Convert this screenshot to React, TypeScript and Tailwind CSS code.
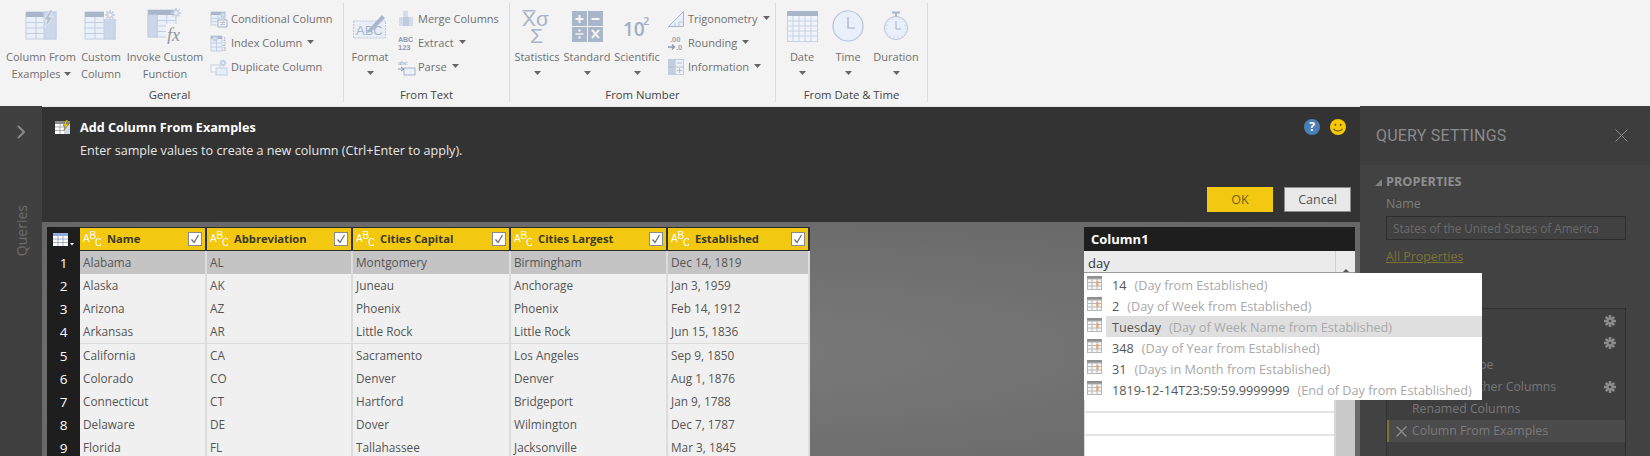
import React from "react";

const font = "font-['Open_Sans','Noto_Sans',sans-serif]";

function Caret({ color = "#666" }: { color?: string }) {
  return (
    <svg width="7" height="4" viewBox="0 0 7 4" className="shrink-0">
      <path d="M0 0h7L3.5 4z" fill={color} />
    </svg>
  );
}

function Burst({ x, y, r = 5, color = "#c3cedf" }: { x: number; y: number; r?: number; color?: string }) {
  const spokes = [0, 45, 90, 135];
  return (
    <g stroke={color} strokeWidth="1.6">
      {spokes.map((a) => (
        <line key={a} x1={x - r} y1={y} x2={x + r} y2={y} transform={`rotate(${a} ${x} ${y})`} />
      ))}
      <circle cx={x} cy={y} r={r * 0.45} fill="#eef2f8" strokeWidth="1" />
    </g>
  );
}

function TableGrid({ x, y, w, h, cols, rows, head = 5 }: { x: number; y: number; w: number; h: number; cols: number; rows: number; head?: number }) {
  const cw = w / cols;
  const rh = (h - head) / rows;
  return (
    <g>
      <rect x={x} y={y} width={w} height={h} fill="#eaf0f8" stroke="#c2cfe2" />
      <rect x={x} y={y} width={w} height={head} fill="#a9b5c9" />
      {Array.from({ length: cols - 1 }).map((_, i) => (
        <line key={i} x1={x + cw * (i + 1)} y1={y + head} x2={x + cw * (i + 1)} y2={y + h} stroke="#c2cfe2" />
      ))}
      {Array.from({ length: rows - 1 }).map((_, i) => (
        <line key={i} x1={x} y1={y + head + rh * (i + 1)} x2={x + w} y2={y + head + rh * (i + 1)} stroke="#c2cfe2" />
      ))}
    </g>
  );
}

function IconFromExamples() {
  return (
    <svg width="36" height="32" viewBox="0 0 36 32">
      <TableGrid x={3} y={2} w={30} h={27} cols={3} rows={4} />
      <rect x="21" y="2" width="12" height="27" fill="#cbd7e9" stroke="#c2cfe2" />
      <path d="M27 0l-6 10h3l-2 8 8-11h-4l4-7z" fill="#b5bfd0" stroke="#f3f3f3" strokeWidth=".7" />
    </svg>
  );
}
function IconCustom() {
  return (
    <svg width="36" height="32" viewBox="0 0 36 32">
      <TableGrid x={2} y={2} w={30} h={27} cols={3} rows={4} />
      <rect x="21" y="7" width="11" height="22" fill="#cbd7e9" stroke="#c2cfe2" />
      <rect x="21" y="0" width="12" height="9" fill="#f3f3f3" />
      <Burst x={27} y={5} />
    </svg>
  );
}
function IconInvoke() {
  return (
    <svg width="38" height="36" viewBox="0 0 38 36">
      <TableGrid x={2} y={2} w={28} h={27} cols={3} rows={4} />
      <rect x="2" y="7" width="9" height="22" fill="#cbd7e9" stroke="#c2cfe2" />
      <Burst x={30} y={5} />
      <rect x="20" y="16" width="18" height="18" fill="#f3f3f3" />
      <text x="21" y="33" fontFamily="Liberation Serif, serif" fontStyle="italic" fontSize="18" fill="#8e96a3">fx</text>
    </svg>
  );
}
function IconFormat() {
  return (
    <svg width="36" height="32" viewBox="0 0 36 32">
      <rect x="1.500" y="11" width="32" height="17" fill="#e8eef7" stroke="#bcc9dd" strokeDasharray="2 1" />
      <text x="4" y="25" fontFamily="Liberation Sans, sans-serif" fontSize="13" fill="#aab6ca">ABC</text>
      <path d="M16 20L30 5l3 3-14 14-4 1z" fill="#a9b5c9" />
    </svg>
  );
}
function IconStatistics() {
  return (
    <svg width="32" height="34" viewBox="0 0 32 34">
      <text x="1" y="17" fontFamily="Liberation Sans, sans-serif" fontSize="21" fill="#a8b3c5">{"Χσ"}</text>
      <rect x="1.500" y="1" width="13" height="1.500" fill="#a8b3c5" />
      <text x="9" y="34" fontFamily="Liberation Sans, sans-serif" fontSize="21" fill="#a8b3c5">{"Σ"}</text>
    </svg>
  );
}
function IconStandard() {
  return (
    <svg width="31" height="31" viewBox="0 0 31 31">
      <rect width="31" height="31" fill="#a9b6ca" />
      <path d="M15.500 0v31M0 15.500h31" stroke="#f3f3f3" strokeWidth="1" />
      <path d="M3.500 8h8M7.500 4v8M19.500 8h8" stroke="#f3f3f3" strokeWidth="2" />
      <path d="M3.500 23h8" stroke="#f3f3f3" strokeWidth="1.500" />
      <circle cx="7.500" cy="19.500" r="1.200" fill="#f3f3f3" />
      <circle cx="7.500" cy="26.500" r="1.200" fill="#f3f3f3" />
      <path d="M20 19l7 8M27 19l-7 8" stroke="#f3f3f3" strokeWidth="2" />
    </svg>
  );
}
function IconScientific() {
  return (
    <svg width="28" height="24" viewBox="0 0 28 24">
      <text x="0" y="22" fontFamily="Open Sans, sans-serif" fontWeight="600" fontSize="19" fill="#a2aec2">10</text>
      <text x="20" y="11" fontFamily="Open Sans, sans-serif" fontWeight="600" fontSize="11" fill="#a2aec2">2</text>
    </svg>
  );
}
function IconDate() {
  return (
    <svg width="31" height="31" viewBox="0 0 31 31">
      <rect x=".5" y=".5" width="30" height="30" fill="#f0f4fa" stroke="#c6d2e4" />
      <rect width="31" height="5" fill="#a9b6ca" />
      {[6, 12, 18, 24].map((v) => (
        <line key={v} x1={v} y1="5" x2={v} y2="31" stroke="#c6d2e4" />
      ))}
      {[10, 15, 20, 25].map((v) => (
        <line key={v} x1="0" y1={v} x2="31" y2={v} stroke="#c6d2e4" />
      ))}
    </svg>
  );
}
function IconTime() {
  return (
    <svg width="32" height="32" viewBox="0 0 32 32">
      <circle cx="16" cy="16" r="15" fill="#eaf0f9" stroke="#b6c3d8" strokeWidth="1.200" />
      <path d="M16 7v11h7" fill="none" stroke="#a2aec2" strokeWidth="1.200" />
    </svg>
  );
}
function IconDuration() {
  return (
    <svg width="26" height="30" viewBox="0 0 26 30">
      <path d="M9 1.500h8M13 1.500v4" stroke="#a9b6ca" strokeWidth="2" />
      <circle cx="13" cy="17" r="11.500" fill="#eaf0f9" stroke="#b6c3d8" />
      <circle cx="13" cy="17" r="9.500" fill="none" stroke="#c3cfe0" strokeDasharray="1 3" />
      <path d="M13 10v8h5" fill="none" stroke="#a2aec2" />
    </svg>
  );
}
function SmallConditional() {
  return (
    <svg width="18" height="17" viewBox="0 0 18 17">
      <TableGrid x={1} y={1} w={14} h={13} cols={2} rows={3} head={3} />
      <rect x="8" y="9" width="9" height="7" fill="#f3f3f3" stroke="#a9b5c9" />
      <path d="M10 13.500h5M10 11.500h5M14 10l-3 5" stroke="#a9b5c9" strokeWidth=".7" />
      <Burst x={13} y={4} r={3} />
    </svg>
  );
}
function SmallIndex() {
  return (
    <svg width="18" height="17" viewBox="0 0 18 17">
      <TableGrid x={1} y={1} w={11} h={15} cols={2} rows={3} head={3} />
      <Burst x={5} y={3.500} r={3} />
      <text x="13" y="6" fontSize="5" fill="#96a2b5" fontFamily="Liberation Sans, sans-serif">1</text>
      <text x="13" y="11" fontSize="5" fill="#96a2b5" fontFamily="Liberation Sans, sans-serif">2</text>
      <text x="13" y="16" fontSize="5" fill="#96a2b5" fontFamily="Liberation Sans, sans-serif">3</text>
    </svg>
  );
}
function SmallDuplicate() {
  return (
    <svg width="18" height="17" viewBox="0 0 18 17">
      <rect x="1" y="6" width="9" height="7" fill="#f7f9fc" stroke="#c2cfe2" />
      <rect x="6" y="9" width="11" height="7" fill="#e6edf6" stroke="#c2cfe2" />
      <Burst x={13} y={4} r={3.500} />
    </svg>
  );
}
function SmallMerge() {
  return (
    <svg width="16" height="16" viewBox="0 0 16 16">
      <rect x="5" y="0" width="5" height="6" fill="#d3dceb" />
      <rect x="1" y="6" width="14" height="9" fill="#d3dceb" />
      <rect x="5" y="6" width="6" height="9" fill="#bfcbdc" />
    </svg>
  );
}
function SmallExtract() {
  return (
    <svg width="16" height="16" viewBox="0 0 16 16">
      <text x="0" y="7" fontSize="7" fontWeight="700" fill="#8d99ad" fontFamily="Liberation Sans, sans-serif">ABC</text>
      <text x="0" y="15" fontSize="7.500" fontWeight="700" fill="#8d99ad" fontFamily="Liberation Sans, sans-serif">123</text>
    </svg>
  );
}
function SmallParse() {
  return (
    <svg width="18" height="17" viewBox="0 0 18 17">
      <text x="0" y="6" fontSize="7" fill="#8d99ad" fontFamily="Liberation Serif, serif">abc</text>
      <rect x="6" y="9" width="11" height="7" fill="#eaf0f8" stroke="#a9b5c9" />
      <path d="M0 10h6M3 8l3 2-3 2" stroke="#8d99ad" fill="none" />
    </svg>
  );
}
function SmallTrig() {
  return (
    <svg width="16" height="16" viewBox="0 0 16 16">
      <path d="M.5 15.500L15.500.5v15z" fill="#e8eef7" stroke="#a9b5c9" />
      <path d="M11 15V11h4M7 15v-3" stroke="#bcc9dd" fill="none" />
    </svg>
  );
}
function SmallRounding() {
  return (
    <svg width="16" height="16" viewBox="0 0 16 16">
      <text x="2" y="7" fontSize="7.500" fontWeight="700" fill="#9aa6b8" fontFamily="Liberation Sans, sans-serif">.00</text>
      <text x="8" y="15" fontSize="7.500" fontWeight="700" fill="#9aa6b8" fontFamily="Liberation Sans, sans-serif">.0</text>
      <path d="M0 12h6M4 9.500L6.500 12 4 14.500" stroke="#8d99ad" strokeWidth="1.300" fill="none" />
    </svg>
  );
}
function SmallInfo() {
  return (
    <svg width="16" height="16" viewBox="0 0 16 16">
      <rect x=".5" y=".5" width="15" height="15" fill="#eaf0f8" stroke="#c2cfe2" />
      <rect x=".5" y=".5" width="6" height="15" fill="#c3cfe0" />
      <path d="M9 4h5M9 11.500h5M11.500 9v5M0 8h16M7 0v16" stroke="#a9b5c9" strokeWidth=".8" />
    </svg>
  );
}

function LargeBtn({ icon, lines, caret, w }: { icon: React.ReactNode; lines: string[]; caret?: "inline" | "below"; w: string }) {
  return (
    <div className={`${w} flex flex-col items-center shrink-0`}>
      <div className="h-[34px] flex items-center justify-center">{icon}</div>
      <div className="mt-[5px] text-[11px] leading-[17px] text-[#707070] text-center whitespace-nowrap">
        <div>{lines[0]}</div>
        {lines[1] ? (
          <div className="flex items-center justify-center gap-[3px]">
            <span>{lines[1]}</span>
            {caret === "inline" && <Caret />}
          </div>
        ) : null}
      </div>
      {caret === "below" && (
        <div className="mt-[6px]">
          <Caret />
        </div>
      )}
    </div>
  );
}

function SmallBtn({ icon, label, caret, w }: { icon: React.ReactNode; label: string; caret?: boolean; w: string }) {
  return (
    <div className="h-[24px] flex items-center text-[11px] text-[#707070] whitespace-nowrap">
      <div className={`${w} shrink-0 flex items-center`}>{icon}</div>
      <span>{label}</span>
      {caret && (
        <span className="ml-[5px] mb-[2px]">
          <Caret />
        </span>
      )}
    </div>
  );
}

function Group({ label, w, pad = "", children }: { label: string; w: string; pad?: string; children: React.ReactNode }) {
  return (
    <div className={`${w} shrink-0 h-[99px] mt-[3px] flex flex-col border-r border-[#dcdcdc]`}>
      <div className="flex-1 flex pt-[6px]">{children}</div>
      <div className={`${pad} h-[14px] text-center text-[11.3px] leading-[14px] text-[#444444]`}>{label}</div>
    </div>
  );
}

function Ribbon() {
  return (
    <div className="h-[106px] shrink-0 bg-[#f3f3f3] flex">
      <Group label="General" w="w-[344px]" pad="pr-[4px]">
        <LargeBtn w="w-[76px] ml-[3px]" icon={<IconFromExamples />} lines={["Column From", "Examples"]} caret="inline" />
        <LargeBtn w="w-[44px]" icon={<IconCustom />} lines={["Custom", "Column"]} />
        <LargeBtn w="w-[80px] ml-[2px]" icon={<IconInvoke />} lines={["Invoke Custom", "Function"]} />
        <div className="ml-[5px] -mt-[2px]">
          <SmallBtn w="w-[21px]" icon={<SmallConditional />} label="Conditional Column" />
          <SmallBtn w="w-[21px]" icon={<SmallIndex />} label="Index Column" caret />
          <SmallBtn w="w-[21px]" icon={<SmallDuplicate />} label="Duplicate Column" />
        </div>
      </Group>
      <Group label="From Text" w="w-[166px]">
        <LargeBtn w="w-[44px] ml-[4px]" icon={<IconFormat />} lines={["Format"]} caret="below" />
        <div className="ml-[6px] -mt-[2px]">
          <SmallBtn w="w-[20px]" icon={<SmallMerge />} label="Merge Columns" />
          <SmallBtn w="w-[20px]" icon={<SmallExtract />} label="Extract" caret />
          <SmallBtn w="w-[20px]" icon={<SmallParse />} label="Parse" caret />
        </div>
      </Group>
      <Group label="From Number" w="w-[266px]">
        <LargeBtn w="w-[50px] ml-[2px]" icon={<IconStatistics />} lines={["Statistics"]} caret="below" />
        <LargeBtn w="w-[50px]" icon={<IconStandard />} lines={["Standard"]} caret="below" />
        <LargeBtn w="w-[50px]" icon={<IconScientific />} lines={["Scientific"]} caret="below" />
        <div className="ml-[6px] -mt-[2px]">
          <SmallBtn w="w-[20px]" icon={<SmallTrig />} label="Trigonometry" caret />
          <SmallBtn w="w-[20px]" icon={<SmallRounding />} label="Rounding" caret />
          <SmallBtn w="w-[20px]" icon={<SmallInfo />} label="Information" caret />
        </div>
      </Group>
      <Group label="From Date & Time" w="w-[152px]">
        <LargeBtn w="w-[44px] ml-[4px]" icon={<IconDate />} lines={["Date"]} caret="below" />
        <LargeBtn w="w-[46px] ml-[1px]" icon={<IconTime />} lines={["Time"]} caret="below" />
        <LargeBtn w="w-[50px]" icon={<IconDuration />} lines={["Duration"]} caret="below" />
      </Group>
    </div>
  );
}

function AbcIcon() {
  return (
    <svg width="18" height="18" viewBox="0 0 18 18" className="shrink-0">
      <g fontFamily="Liberation Sans, sans-serif" fontSize="10" fill="#ffffff">
        <text x="0" y="12">A</text>
        <text x="6.500" y="9">B</text>
        <text x="12" y="16">C</text>
      </g>
    </svg>
  );
}

function CheckBox() {
  return (
    <div className="w-[14px] h-[14px] shrink-0 bg-white border border-[#8a8a8a] flex items-center justify-center">
      <svg width="10" height="10" viewBox="0 0 10 10">
        <path d="M1.500 5.500L4 8.500 8.500 1" fill="none" stroke="#6f6f6f" strokeWidth="1.300" />
      </svg>
    </div>
  );
}

const cols = ["Name", "Abbreviation", "Cities Capital", "Cities Largest", "Established"];
const rows = [
  ["Alabama", "AL", "Montgomery", "Birmingham", "Dec 14, 1819"],
  ["Alaska", "AK", "Juneau", "Anchorage", "Jan 3, 1959"],
  ["Arizona", "AZ", "Phoenix", "Phoenix", "Feb 14, 1912"],
  ["Arkansas", "AR", "Little Rock", "Little Rock", "Jun 15, 1836"],
  ["California", "CA", "Sacramento", "Los Angeles", "Sep 9, 1850"],
  ["Colorado", "CO", "Denver", "Denver", "Aug 1, 1876"],
  ["Connecticut", "CT", "Hartford", "Bridgeport", "Jan 9, 1788"],
  ["Delaware", "DE", "Dover", "Wilmington", "Dec 7, 1787"],
  ["Florida", "FL", "Tallahassee", "Jacksonville", "Mar 3, 1845"],
];
const grid = "grid grid-cols-[33px_127px_146px_158px_157px_142px]";

function DataTable() {
  return (
    <div className="w-[763px] shrink-0">
      <div className={`${grid} h-[24px]`}>
        <div className="bg-[#1e1e1e] flex items-center justify-center">
          <svg width="22" height="15" viewBox="0 0 22 15">
            <rect x="0" y="1" width="15" height="13" fill="#ffffff" />
            <rect x="0" y="1" width="15" height="3" fill="#8faadc" />
            <path d="M5 4v10M10 4v10M0 7h15M0 10.500h15" stroke="#8b9db8" strokeWidth=".8" />
            <path d="M17 11h4l-2 2.500z" fill="#ffffff" />
          </svg>
        </div>
        {cols.map((c) => (
          <div key={c} className="bg-[#f2c811] border-y border-y-[#2a2a2a] border-r-2 border-r-[#2f3640] flex items-center pl-[3px] pr-[3px]">
            <AbcIcon />
            <span className="ml-[6px] flex-1 pt-[1px] text-[11.2px] font-bold text-[#3a3a2a] whitespace-nowrap">{c}</span>
            <CheckBox />
          </div>
        ))}
      </div>
      {rows.map((r, i) => (
        <div key={r[0]} className={`${grid} h-[23.17px]`}>
          <div className="bg-[#1e1e1e] text-white text-[13.5px] leading-[24px] text-center border-b border-b-[#333333]">{i + 1}</div>
          {r.map((v) => (
            <div
              key={v}
              className={`border-b-2 border-r-2 border-b-[#dcdcdc] border-r-[#dcdcdc] pl-[3px] text-[11.8px] leading-[23px] text-[#555555] whitespace-nowrap ${
                i === 0 ? "bg-[#c4c4c4]" : "bg-[#f0f0f0]"
              }`}
            >
              {v}
            </div>
          ))}
        </div>
      ))}
    </div>
  );
}

function SuggestIcon() {
  return (
    <svg width="15" height="14" viewBox="0 0 15 14" className="shrink-0">
      <rect width="15" height="3" fill="#909090" />
      <rect x=".5" y="3" width="14" height="10.500" fill="#f6f6f6" stroke="#b8b8b8" />
      <path d="M5 3v11M10 3v11M0 6.500h15M0 10h15" stroke="#b8b8b8" />
      <rect x="9.500" y="5" width="2" height="5" fill="#f0a060" />
    </svg>
  );
}

const suggestions: [string, string][] = [
  ["14", "(Day from Established)"],
  ["2", "(Day of Week from Established)"],
  ["Tuesday", "(Day of Week Name from Established)"],
  ["348", "(Day of Year from Established)"],
  ["31", "(Days in Month from Established)"],
  ["1819-12-14T23:59:59.9999999", "(End of Day from Established)"],
];

function ExampleColumn() {
  return (
    <div className="w-[271px] shrink-0 relative">
      <div className="h-[24px] bg-[#1e1e1e] text-white font-bold text-[13px] leading-[24px] pl-[7px]">Column1</div>
      <div className="h-[22px] flex bg-[#ebebeb] border-b border-b-[#9a9a9a]">
        <div className="flex-1 text-[13px] leading-[25px] text-[#333333] pl-[4px] border-r border-r-[#d0d0d0]">day</div>
        <div className="w-[19px] flex items-end justify-center">
          <svg width="6" height="3" viewBox="0 0 6 3">
            <path d="M0 3h6L3 0z" fill="#555555" />
          </svg>
        </div>
      </div>
      <div className="flex">
        <div className="w-[252px] bg-white border-l border-l-[#d8d8d8] border-r-2 border-r-[#d8d8d8]">
          {Array.from({ length: 9 }).map((_, i) => (
            <div key={i} className={`border-b-2 border-b-[#e4e4e4] ${i === 5 ? "h-[24px]" : "h-[23.17px]"}`} />
          ))}
        </div>
        <div className="w-[19px] bg-[#c9c9c9]" />
      </div>
      <div className="absolute z-10 top-[46px] left-0 w-[398px] h-[127px] bg-white pt-[1px]">
        {suggestions.map(([v, d]) => {
          const active = v === "Tuesday";
          return (
            <div key={v} className="h-[21px] flex items-center whitespace-nowrap">
              <div className="w-[22px] pl-[3px] shrink-0 -mt-[4px]">
                <SuggestIcon />
              </div>
              <div className={`flex-1 h-full flex items-center pt-[3px] pl-[6px] ${active ? "bg-[#dfdfdf]" : ""}`}>
                <span className="text-[12.7px] text-[#555555]">{v}</span>
                <span className="ml-[8px] text-[12.7px] text-[#a9a9a9]">{d}</span>
              </div>
            </div>
          );
        })}
      </div>
    </div>
  );
}

function Gear() {
  return (
    <svg width="12" height="12" viewBox="0 0 12 12" className="shrink-0">
      <g stroke="#8c8c8c" strokeWidth="2.500">
        <path d="M6 0v12M0 6h12M1.800 1.800l8.400 8.400M10.200 1.800l-8.400 8.400" />
      </g>
      <circle cx="6" cy="6" r="3" fill="#8c8c8c" />
      <circle cx="6" cy="6" r="1.300" fill="#404040" />
    </svg>
  );
}

const steps: [string, boolean][] = [
  ["Source", true],
  ["Navigation", true],
  ["Changed Type", false],
  ["Removed Other Columns", true],
  ["Renamed Columns", false],
];

function QuerySettings() {
  return (
    <div className="w-[290px] shrink-0 bg-[#424242] flex flex-col">
      <div className="h-[59px] shrink-0 bg-[#3d3d3d] flex items-center justify-between pl-[16px] pr-[22px]">
        <span className="font-['Roboto',sans-serif] text-[16px] tracking-[0.2px] text-[#8b8b8b]">QUERY SETTINGS</span>
        <svg width="13" height="13" viewBox="0 0 13 13">
          <path d="M.5.5l12 12M12.500.5l-12 12" stroke="#8a8a8a" strokeWidth="1" />
        </svg>
      </div>
      <div className="pl-[26px] pr-[24px] pt-[8px]">
        <div className="relative h-[18px] flex items-center text-[12.7px] font-bold text-[#8f8f8f]">
          <svg width="7" height="7" viewBox="0 0 7 7" className="absolute -left-[11px] top-[6px]">
            <path d="M7 0v7H0z" fill="#7f7f7f" />
          </svg>
          PROPERTIES
        </div>
        <div className="mt-[4px] text-[12.4px] leading-[18px] text-[#7e7e7e]">Name</div>
        <div className="mt-[3px] h-[24px] border border-[#2d2d2d] bg-[#414141] pl-[6px] text-[11.7px] leading-[22px] text-[#6b6b6b] whitespace-nowrap">
          States of the United States of America
        </div>
        <div className="mt-[8px] text-[12.4px] leading-[18px] text-[#7d7332] underline">All Properties</div>
        <div className="mt-[14px] text-[12.7px] leading-[18px] font-bold text-[#8f8f8f]">APPLIED STEPS</div>
        <div className="mt-[10px] h-[200px] border-t border-l border-r border-[#2f2f2f] bg-[#3f3f3f] pt-[1px]">
          {steps.map(([s, g]) => (
            <div key={s} className="h-[22px] flex items-center justify-between pl-[25px] pr-[9px] text-[12.3px] text-[#777777] whitespace-nowrap">
              <span>{s}</span>
              {g && <Gear />}
            </div>
          ))}
          <div className="h-[22px] flex items-center bg-[#4b4b4b] border-l-2 border-l-[#7d7332] pl-[7px] text-[12.3px] text-[#7b7b7b] whitespace-nowrap">
            <svg width="11" height="11" viewBox="0 0 11 11" className="mr-[5px] shrink-0">
              <path d="M.5.5l10 10M10.500.5l-10 10" stroke="#8c8c8c" strokeWidth="1.300" />
            </svg>
            Column From Examples
          </div>
        </div>
      </div>
    </div>
  );
}

function DialogHead() {
  return (
    <div className="h-[116px] shrink-0 bg-[#333333] flex flex-col border-t-[1px] border-t-[#e8e8e8] pl-[13px] pr-[9px]">
      <div className="flex pt-[12px]">
        <svg width="16" height="15" viewBox="0 0 16 15" className="mt-[1px] shrink-0">
          <rect x="0" y="1" width="15" height="13" fill="#ffffff" />
          <rect x="0" y="1" width="15" height="3" fill="#8c8c8c" />
          <path d="M5 4v10M10 4v10M0 7h15M0 10.500h15" stroke="#9a9a9a" strokeWidth=".8" />
          <rect x="10" y="4" width="5" height="10" fill="#cfd8e6" />
          <path d="M11 0L8 6h2L9 10l5-6h-3l2-4z" fill="#f2c811" stroke="#333333" strokeWidth=".4" />
        </svg>
        <div className="ml-[9px] flex-1">
          <div className="text-[12.6px] font-bold text-white leading-[18px]">Add Column From Examples</div>
          <div className="mt-[5px] text-[12.6px] text-[#e6e6e6] leading-[18px]">Enter sample values to create a new column (Ctrl+Enter to apply).</div>
        </div>
        <div className="flex items-start gap-[10px] pr-[5px]">
          <div className="w-[16px] h-[16px] rounded-full bg-[#4a80b8] text-white text-[12px] font-bold leading-[16px] text-center">?</div>
          <svg width="16" height="16" viewBox="0 0 15 15">
            <circle cx="7.500" cy="7.500" r="7.500" fill="#f8c800" />
            <circle cx="5" cy="5.500" r="1" fill="#6b5a10" />
            <circle cx="10" cy="5.500" r="1" fill="#6b5a10" />
            <path d="M3.500 9c1 3 7 3 8 0" fill="none" stroke="#6b5a10" />
          </svg>
        </div>
      </div>
      <div className="flex justify-end gap-[11px] mt-[27px]">
        <div className="w-[66px] h-[25px] bg-[#f2c811] text-[#6e5f10] text-[12.5px] leading-[25px] text-center">OK</div>
        <div className="w-[67px] h-[25px] bg-[#e8e8e8] border border-[#8c8c8c] text-[#555555] text-[12.5px] leading-[23px] text-center">Cancel</div>
      </div>
    </div>
  );
}

export default function App() {
  return (
    <div className={`${font} w-[1650px] h-[456px] overflow-hidden flex flex-col bg-[#333333]`}>
      <Ribbon />
      <div className="flex-1 flex min-h-0">
        <div className="w-[42px] shrink-0 bg-[#404040] flex flex-col items-center pt-[19px]">
          <svg width="10" height="14" viewBox="0 0 10 14">
            <path d="M2 1l6 6-6 6" fill="none" stroke="#8a8a8a" strokeWidth="2" />
          </svg>
          <div className="mt-[66px] [writing-mode:vertical-rl] rotate-180 text-[14px] text-[#6d6d6d]">Queries</div>
        </div>
        <div className="flex-1 flex flex-col min-w-0">
          <DialogHead />
          <div className="flex-1 flex justify-between px-[5px] pt-[5px] bg-[radial-gradient(ellipse_at_center,#7a7a7a,#666666)]">
            <DataTable />
            <ExampleColumn />
          </div>
        </div>
        <QuerySettings />
      </div>
    </div>
  );
}
